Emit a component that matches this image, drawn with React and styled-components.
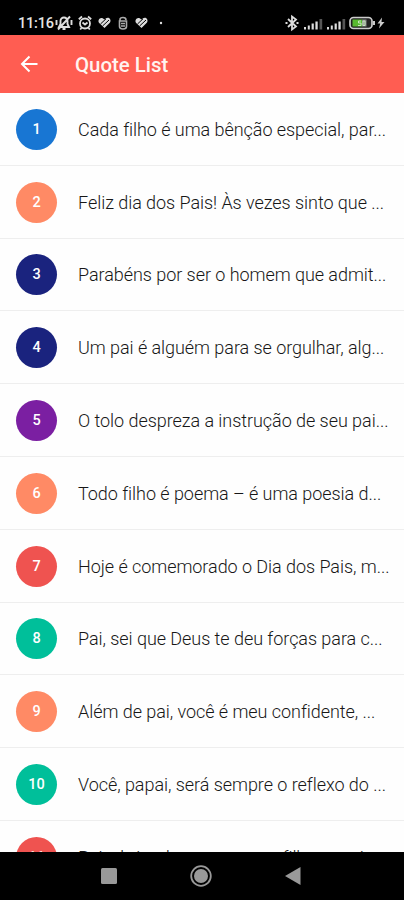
import React from "react";
import styled, { createGlobalStyle } from "styled-components";

const Global = createGlobalStyle`
  * { box-sizing: border-box; }
  body { margin: 0; background: #fff; font-family: Roboto, "Noto Sans", sans-serif; }
`;
const Screen = styled.div`
  width: 404px; height: 900px; display: flex; flex-direction: column;
  overflow: hidden; background: #fefefe;
`;
const StatusBar = styled.header`
  flex: none; height: 35px; padding: 11px 19px 0 18px; display: flex;
  justify-content: space-between; background: #000; color: #e4e4e4;
`;
const StatusGroup = styled.div`
  display: flex; align-items: center; height: 24px;
`;
const Clock = styled.span`
  width: 37px; font-size: 14.5px; line-height: 22px; font-weight: 500;
  letter-spacing: -0.2px; padding-top: 1px; white-space: nowrap;
`;
const StatusIcon = styled.svg`
  display: block; flex: none; width: ${(p) => p.$w}px; height: 16px;
  margin-left: ${(p) => p.$gap || 0}px; overflow: visible;
`;
const AppBar = styled.div`
  flex: none; height: 58px; padding: 1px 20px 0; display: flex; align-items: center;
  background: #ff5d52; color: #fff;
`;
const BackButton = styled.button`
  display: flex; border: 0; padding: 0; background: none; color: inherit;
  width: 55px; height: 18px; margin-top: -1px;
`;
const Title = styled.h1`
  margin: 1px 0 0; font-size: 20.4px; line-height: 24px; font-weight: 500; color: #fff3ef;
`;
const List = styled.main`
  flex: 1; min-height: 0; overflow: hidden;
`;
const Row = styled.div`
  height: 72.8px; padding: 1px 12px 0 16px; display: flex; align-items: center;
  border-bottom: 1px solid #eeeeee;
`;
const Badge = styled.div`
  flex: none; width: 41px; height: 41px; border-radius: 50%; display: flex;
  align-items: center; justify-content: center; background: ${(p) => p.$color};
  color: #fff; font-size: 14.5px; font-weight: 500;
`;
const Quote = styled.span`
  margin-left: 21px; padding-top: 1px; font-size: 18px; line-height: 26px; font-weight: 300;
  letter-spacing: -0.05px; color: #171717; white-space: nowrap;
`;
const NavBar = styled.nav`
  flex: none; height: 48px; padding: 0 103px 0 101px; display: flex;
  align-items: center; justify-content: space-between; background: #000;
`;

const quotes = [
  ["#1876d3", "Cada filho é uma bênção especial, par..."],
  ["#ff8a65", "Feliz dia dos Pais! Às vezes sinto que ..."],
  ["#1a237e", "Parabéns por ser o homem que admit..."],
  ["#1a237e", "Um pai é alguém para se orgulhar, alg..."],
  ["#7b1fa2", "O tolo despreza a instrução de seu pai..."],
  ["#ff8a65", "Todo filho é poema – é uma poesia d..."],
  ["#ef5350", "Hoje é comemorado o Dia dos Pais, m..."],
  ["#00bf9a", "Pai, sei que Deus te deu forças para c..."],
  ["#ff8a65", "Além de pai, você é meu confidente, ..."],
  ["#00bf9a", "Você, papai, será sempre o reflexo do ..."],
  ["#ef5350", "Pai, obrigado por ser meu filho e mais..."],
];

const Signal = ({ gap }) => (
  <StatusIcon $w={19} $gap={gap} viewBox="0 0 19 16" fill="#ddd">
    <path d="M0 12h2v2.500H0zM3.800 10.500h2v4h-2zM7.600 8.500h2.200v6H7.600zM11.400 6.500h2.300v8h-2.300z" />
    <path d="M15.500 4h2.700v10.500h-2.700z" fill="#555" />
  </StatusIcon>
);
const StripedHeart = ({ gap }) => (
  <StatusIcon $w={13} $gap={gap} viewBox="0 0 13 16">
    <path d="M6.500 13L1.200 8C-.8 5.500 2 1.500 5 3.400l1.500 1.200L8 3.300c3-2 6 1.500 3.800 4.500z" fill="#ddd" />
    <path d="M2.500 9L8 3.800M4.600 11L11 5" fill="none" stroke="#000" strokeWidth="1" />
  </StatusIcon>
);

export default function App() {
  return (
    <Screen>
      <Global />
      <StatusBar>
        <StatusGroup>
          <Clock>11:16</Clock>
          <StatusIcon $w={18} viewBox="0 0 18 16" fill="none" stroke="#ddd" strokeWidth="1.900">
            <path d="M4 12h10l-1.500-3V6a3.500 3.500 0 0 0-7 0v3zM15 1.500L3 14.500M1.500 5v5M16.500 5v5M7.500 14h3" />
          </StatusIcon>
          <StatusIcon $w={14} $gap={5} viewBox="0 0 14 16" fill="none" stroke="#ddd" strokeWidth="1.800">
            <circle cx="7" cy="8.500" r="5" /><path d="M.8 4.200L4 1.500M13.200 4.200L10 1.500M4.500 7.500L7 9.500l2.500-2M3.500 13L2.200 14.500M10.500 13l1.300 1.500" />
          </StatusIcon>
          <StripedHeart gap={6} />
          <StatusIcon $w={10} $gap={7} viewBox="0 0 10 16" fill="none" stroke="#aaa" strokeWidth="1.600">
            <path d="M2 6V4.500Q2 2.500 5 2.500T8 5M1.500 6h7v5.500Q8.500 14 5 14t-3.500-2.500zM3 8.500h4M3 11h4" />
          </StatusIcon>
          <StripedHeart gap={7} />
          <StatusIcon $w={4} $gap={11} viewBox="0 0 4 16"><circle cx="2" cy="8" r="1.200" fill="#ddd" /></StatusIcon>
        </StatusGroup>
        <StatusGroup>
          <StatusIcon $w={14} viewBox="0 0 14 16" fill="none" stroke="#ddd" strokeWidth="1.800">
            <path d="M3 4l8 7.500-4 3V1.500l4 3L3 12M.5 8h2M11.500 8h2" />
          </StatusIcon>
          <Signal gap={5} /><Signal gap={4} />
          <StatusIcon $w={26} $gap={3} viewBox="0 0 26 16">
            <rect x="1" y="2.500" width="22" height="11" rx="3.500" fill="#222" stroke="#ccc" strokeWidth="1.700" />
            <path d="M3.500 4.500h9.500v7H3.500z" fill="#58b92f" /><path d="M13 4.500h4.500v7H13z" fill="#888" />
            <path d="M12 6H9.500v2H12v2.500H9M14 6h2v4.500h-2z" fill="none" stroke="#c8e8bd" strokeWidth="1" />
            <path d="M24 6h2v4h-2z" fill="#ccc" />
          </StatusIcon>
          <StatusIcon $w={8} $gap={2} viewBox="0 0 8 16"><path d="M5 2.500L.5 8.500h2.700L2 13.500 7.500 7H4.500z" fill="#ccc" /></StatusIcon>
        </StatusGroup>
      </StatusBar>
      <AppBar>
        <BackButton aria-label="Back">
          <svg width="18" height="18" viewBox="0 0 18 18" fill="none" stroke="currentColor" strokeWidth="2"><path d="M17.500 9H2.500M9.500 1.500L2 9l7.500 7.500" /></svg>
        </BackButton>
        <Title>Quote List</Title>
      </AppBar>
      <List>
        {quotes.map(([color, text], i) => (
          <Row key={i}><Badge $color={color}>{i + 1}</Badge><Quote>{text}</Quote></Row>
        ))}
      </List>
      <NavBar>
        <svg width="16" height="16"><rect width="16" height="16" rx="1.500" fill="#999" /></svg>
        <svg width="22" height="22"><circle cx="11" cy="11" r="9.800" fill="none" stroke="#999" strokeWidth="1.800" /><circle cx="11" cy="11" r="7" fill="#999" /></svg>
        <svg width="16" height="18"><path d="M0 9L15.500 0v18z" fill="#999" /></svg>
      </NavBar>
    </Screen>
  );
}
